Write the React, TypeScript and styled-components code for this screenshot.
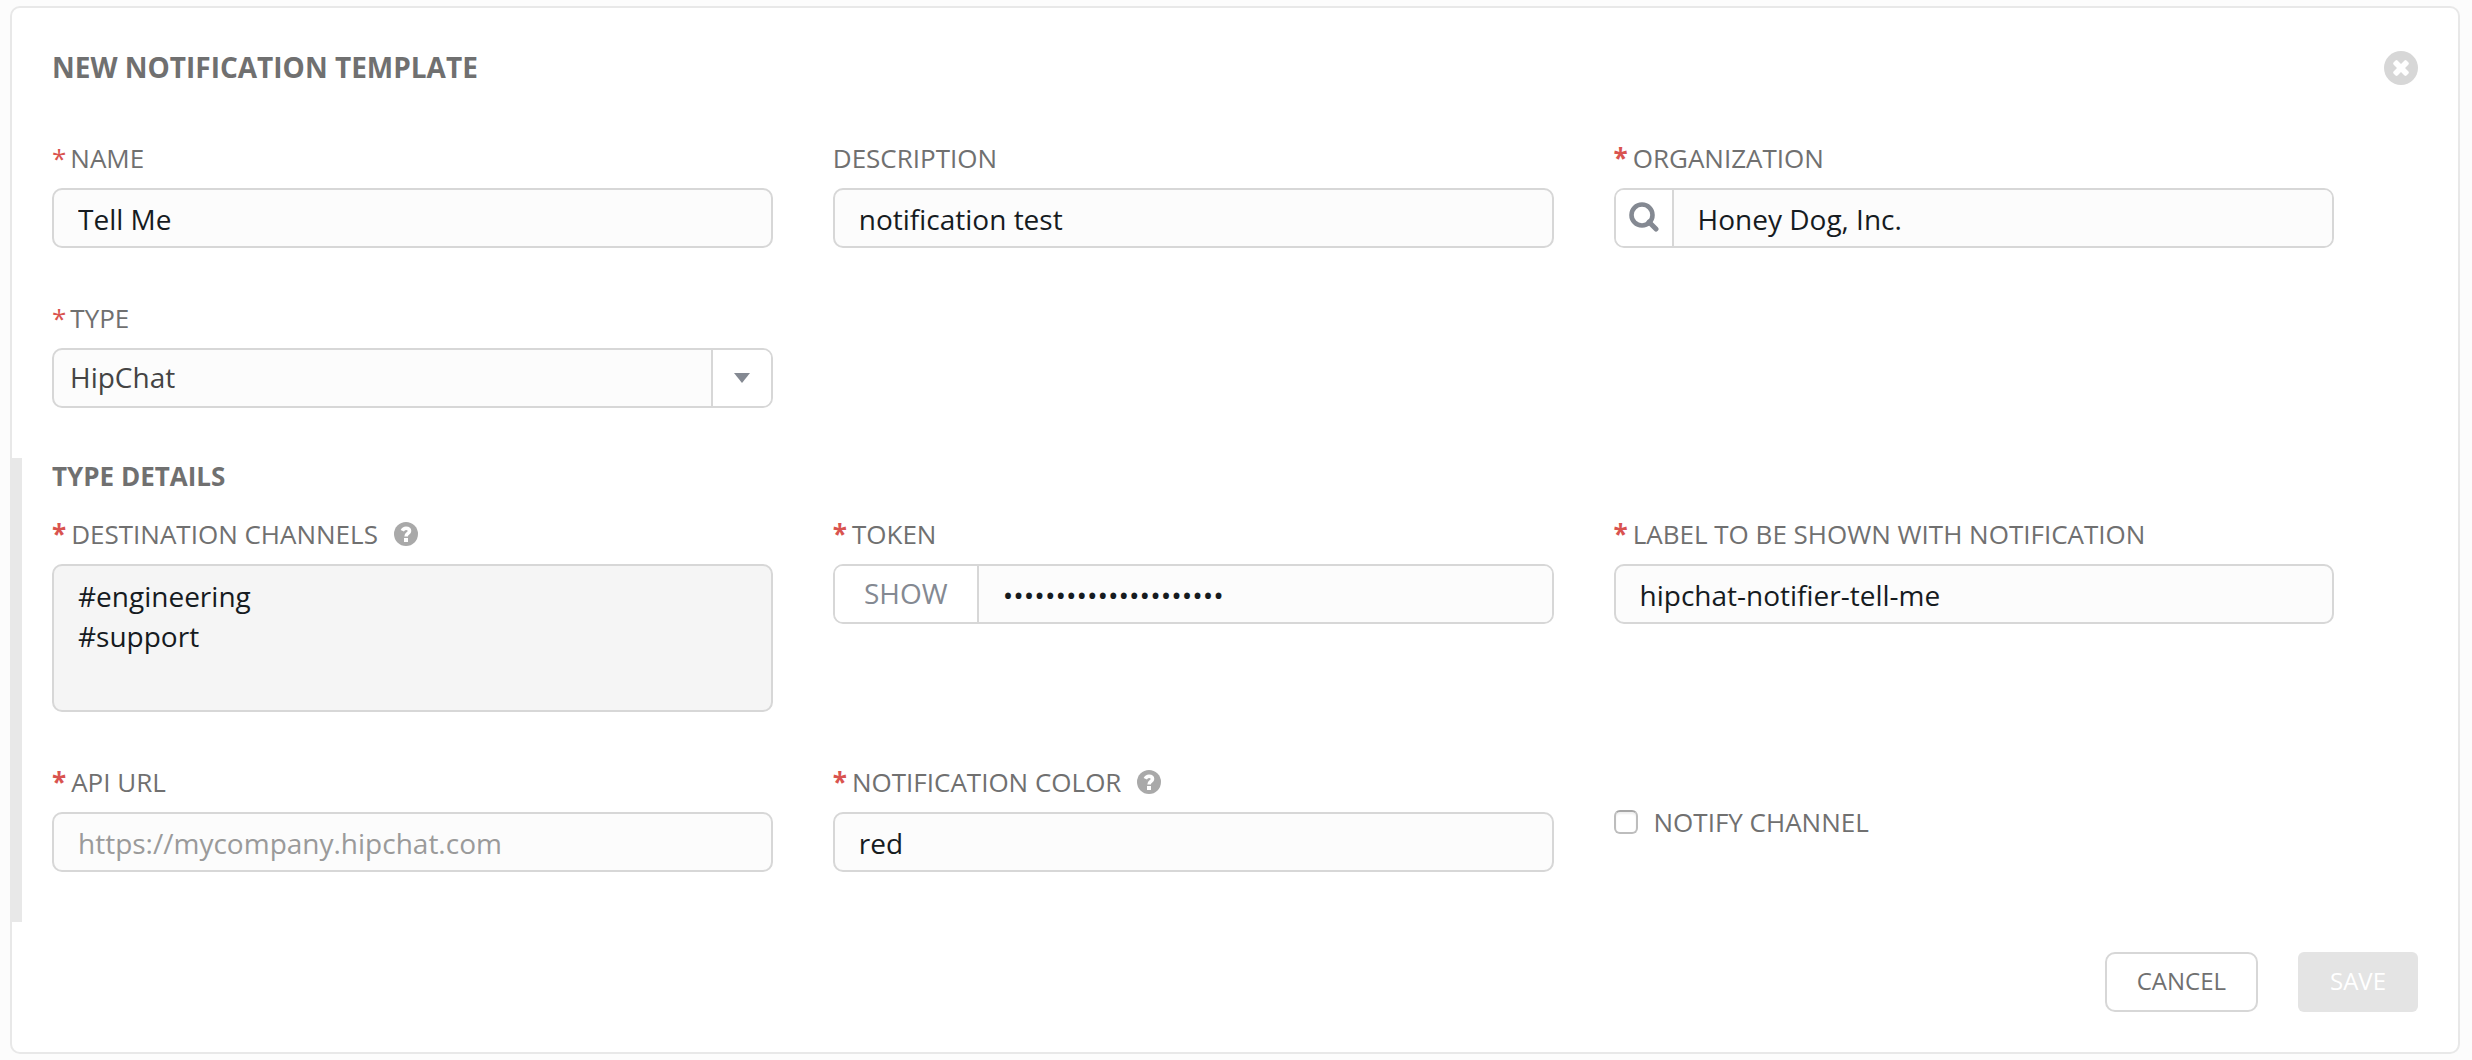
import React, { useState } from "react";
import styled, { createGlobalStyle } from "styled-components";

const GlobalStyle = createGlobalStyle`
  *, *::before, *::after { box-sizing: border-box; }
  body {
    margin: 0;
    background: #fcfcfc;
    font-family: "Open Sans", "Noto Sans", sans-serif;
    color: #707070;
  }
  input, textarea, select, button { font-family: inherit; margin: 0; }
`;

const Panel = styled.form`
  margin: 6px 12px 6px 10px;
  padding: 40px;
  background: #fff;
  border: 2px solid #e8e8e8;
  border-radius: 10px;
`;

const PanelHeader = styled.header`
  display: flex;
  align-items: center;
  justify-content: space-between;
  height: 40px;
`;

const Title = styled.h1`
  margin: 0;
  padding-bottom: 2px;
  font-size: 28px;
  line-height: 38px;
  font-weight: 700;
  text-transform: uppercase;
`;

const CloseButton = styled.button`
  display: flex;
  padding: 0;
  border: 0;
  background: none;
  color: #d7d7d7;
  cursor: pointer;
`;

const FieldGrid = styled.div`
  display: grid;
  grid-template-columns: repeat(3, 33%);
  row-gap: 40px;
`;

const MainFields = styled(FieldGrid)`
  padding-top: 40px;
`;

const Field = styled.div`
  padding-right: 60px;
`;

const FieldHead = styled.div`
  display: flex;
  align-items: center;
  gap: 16px;
  height: 60px;
`;

const Label = styled.label`
  font-size: 26px;
  line-height: 36px;
  text-transform: uppercase;
  white-space: nowrap;
`;

const Asterisk = styled.span<{ $bold?: boolean }>`
  margin-right: ${(p) => (p.$bold ? 5 : 4)}px;
  color: #d9534f;
  font-weight: ${(p) => (p.$bold ? 700 : 400)};
`;

const HelpButton = styled.button`
  display: flex;
  padding: 0;
  border: 0;
  background: none;
  color: #a9a9a9;
  cursor: pointer;
`;

const TextInput = styled.input`
  display: block;
  width: 100%;
  height: 60px;
  padding: 2px 24px 0;
  border: 2px solid #d7d7d7;
  border-radius: 10px;
  background: #fcfcfc;
  color: #161b1f;
  font-size: 28px;
  outline: none;
  &::placeholder { color: #9a9a9a; opacity: 1; }
`;

const TextArea = styled.textarea`
  display: block;
  width: 100%;
  height: 148px;
  padding: 10px 24px;
  border: 2px solid #d7d7d7;
  border-radius: 10px;
  background: #f5f5f5;
  color: #161b1f;
  font-size: 28px;
  line-height: 40px;
  resize: none;
  outline: none;
`;

const InputGroup = styled.div`
  display: flex;
  height: 60px;
  border: 2px solid #d7d7d7;
  border-radius: 10px;
  background: #fcfcfc;
  overflow: hidden;
`;

const GroupButton = styled.button<{ $width: number }>`
  display: flex;
  align-items: center;
  justify-content: center;
  flex: none;
  width: ${(p) => p.$width}px;
  padding: 0 0 2px;
  border: 0;
  border-right: 2px solid #d7d7d7;
  background: #fff;
  color: #848992;
  font-size: 28px;
  cursor: pointer;
`;

const GroupInput = styled(TextInput)`
  flex: 1;
  min-width: 0;
  height: 100%;
  border: 0;
  border-radius: 0;
`;

const SelectBox = styled.div`
  display: grid;
  grid-template-columns: 1fr 60px;
  height: 60px;
  border: 2px solid #d7d7d7;
  border-radius: 10px;
  background: #fcfcfc;
  overflow: hidden;
`;

const Select = styled.select`
  grid-area: 1 / 1 / 2 / 3;
  appearance: none;
  padding: 0 76px 2px 16px;
  border: 0;
  background: transparent;
  color: #444;
  font-size: 28px;
  outline: none;
`;

const SelectArrow = styled.span`
  grid-area: 1 / 2;
  display: flex;
  align-items: center;
  justify-content: center;
  border-left: 2px solid #d7d7d7;
  background: #fff;
  color: #848992;
  pointer-events: none;
`;

const TypeDetails = styled.section`
  margin: 50px 0 0 -40px;
  padding: 0 0 50px 30px;
  border-left: 10px solid #e8e8e8;
`;

const SectionTitle = styled.h2`
  margin: 0;
  padding-bottom: 10px;
  font-size: 26px;
  line-height: 36px;
  font-weight: 700;
  text-transform: uppercase;
`;

const CheckField = styled(Field)`
  display: flex;
  align-items: center;
  gap: 16px;
  height: 120px;
  padding-top: 20px;
`;

const CheckBox = styled.input`
  appearance: none;
  flex: none;
  width: 24px;
  height: 24px;
  border: 2px solid #bdbdbd;
  border-top-color: #a6a6a6;
  border-radius: 6px;
  background: #fff;
  box-shadow: inset 0 2px 2px #efefef;
  &:checked { background: #848992; }
`;

const Actions = styled.footer`
  display: flex;
  justify-content: flex-end;
  gap: 40px;
  padding-top: 30px;
`;

const ActionButton = styled.button<{ $primary?: boolean }>`
  height: 60px;
  padding: 0 ${(p) => (p.$primary ? 32 : 30)}px 4px;
  border: ${(p) => (p.$primary ? "0" : "2px solid #d7d7d7")};
  border-radius: ${(p) => (p.$primary ? 6 : 10)}px;
  background: ${(p) => (p.$primary ? "#e4e4e4" : "#fff")};
  color: ${(p) => (p.$primary ? "#fff" : "#707070")};
  font-size: 24px;
  text-transform: uppercase;
`;

const CloseIcon = () => (
  <svg width="34" height="34" viewBox="0 0 34 34" aria-hidden="true">
    <circle cx="17" cy="17" r="17" fill="currentColor" />
    <path
      d="M13.500 9.500L17 13l3.500-3.500q1-.8 2 0l2 2q.8 1 0 2L21 17l3.500 3.500q.8 1 0 2l-2 2q-1 .8-2 0L17 21l-3.500 3.500q-1 .8-2 0l-2-2q-.8-1 0-2L13 17l-3.500-3.500q-.8-1 0-2l2-2q1-.8 2 0z"
      fill="#fff"
    />
  </svg>
);

const HelpIcon = () => (
  <svg width="24" height="24" viewBox="0 0 24 24" aria-hidden="true">
    <circle cx="12" cy="12" r="12" fill="currentColor" />
    <path
      d="M8.300 8.800C9 7.200 10.200 6.200 12 6.200c2.200 0 3.500 1.200 3.500 2.800 0 2.500-3.400 2.500-3.400 5.500"
      stroke="#fff"
      strokeWidth="3.600"
      fill="none"
    />
    <rect x="10" y="16" width="4" height="4" fill="#fff" />
  </svg>
);

const SearchIcon = () => (
  <svg width="30" height="30" viewBox="0 0 30 30" fill="none" stroke="currentColor" aria-hidden="true">
    <circle cx="13" cy="13" r="10.500" strokeWidth="4.600" />
    <path d="M20 20l7 7" strokeWidth="5" strokeLinecap="round" />
  </svg>
);

const ArrowIcon = () => (
  <svg width="16" height="10" viewBox="0 0 16 10" aria-hidden="true">
    <path d="M0 0h16l-8 10z" fill="currentColor" />
  </svg>
);

type HeadProps = { id: string; text: string; required?: "normal" | "bold"; help?: boolean };

const Head = ({ id, text, required, help }: HeadProps) => (
  <FieldHead>
    <Label htmlFor={id}>
      {required && <Asterisk $bold={required === "bold"}>*</Asterisk>}
      {text}
    </Label>
    {help && (
      <HelpButton type="button" aria-label={`Help: ${text}`}>
        <HelpIcon />
      </HelpButton>
    )}
  </FieldHead>
);

export default function App() {
  const [shown, setShown] = useState(false);
  return (
    <>
      <GlobalStyle />
      <Panel onSubmit={(e) => e.preventDefault()}>
        <PanelHeader>
          <Title>New Notification Template</Title>
          <CloseButton type="button" aria-label="Close">
            <CloseIcon />
          </CloseButton>
        </PanelHeader>

        <MainFields>
          <Field>
            <Head id="name" text="Name" required="normal" />
            <TextInput id="name" defaultValue="Tell Me" />
          </Field>
          <Field>
            <Head id="description" text="Description" />
            <TextInput id="description" defaultValue="notification test" />
          </Field>
          <Field>
            <Head id="organization" text="Organization" required="bold" />
            <InputGroup>
              <GroupButton type="button" $width={58} aria-label="Look up organization">
                <SearchIcon />
              </GroupButton>
              <GroupInput id="organization" defaultValue="Honey Dog, Inc." />
            </InputGroup>
          </Field>
          <Field>
            <Head id="type" text="Type" required="normal" />
            <SelectBox>
              <SelectArrow>
                <ArrowIcon />
              </SelectArrow>
              <Select id="type" defaultValue="HipChat">
                <option>HipChat</option>
              </Select>
            </SelectBox>
          </Field>
        </MainFields>

        <TypeDetails>
          <SectionTitle>Type Details</SectionTitle>
          <FieldGrid>
            <Field>
              <Head id="channels" text="Destination Channels" required="bold" help />
              <TextArea id="channels" defaultValue={"#engineering\n#support"} />
            </Field>
            <Field>
              <Head id="token" text="Token" required="bold" />
              <InputGroup>
                <GroupButton type="button" $width={144} onClick={() => setShown(!shown)}>
                  {shown ? "HIDE" : "SHOW"}
                </GroupButton>
                <GroupInput id="token" type={shown ? "text" : "password"} defaultValue="abcdefghijklmnopqrstu" />
              </InputGroup>
            </Field>
            <Field>
              <Head id="label" text="Label to be shown with notification" required="bold" />
              <TextInput id="label" defaultValue="hipchat-notifier-tell-me" />
            </Field>
            <Field>
              <Head id="url" text="API URL" required="bold" />
              <TextInput id="url" placeholder="https://mycompany.hipchat.com" />
            </Field>
            <Field>
              <Head id="color" text="Notification Color" required="bold" help />
              <TextInput id="color" defaultValue="red" />
            </Field>
            <CheckField>
              <CheckBox id="notify" type="checkbox" />
              <Label htmlFor="notify">Notify Channel</Label>
            </CheckField>
          </FieldGrid>
        </TypeDetails>

        <Actions>
          <ActionButton type="button">Cancel</ActionButton>
          <ActionButton type="submit" $primary disabled>
            Save
          </ActionButton>
        </Actions>
      </Panel>
    </>
  );
}
